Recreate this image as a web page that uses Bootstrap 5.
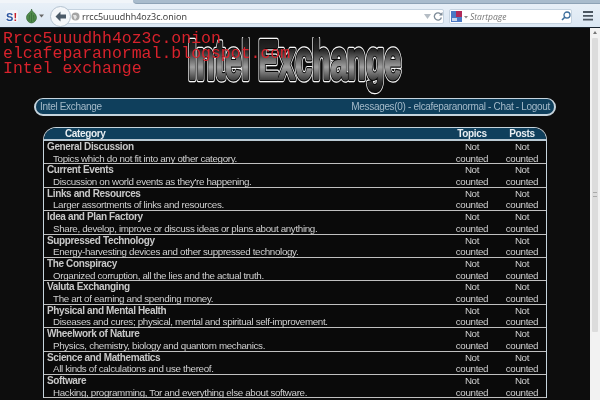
<!DOCTYPE html>
<html lang="en">
<head>
<meta charset="utf-8">
<title>Intel Exchange</title>
<link href="https://cdn.jsdelivr.net/npm/bootstrap@5.3.0/dist/css/bootstrap.min.css" rel="stylesheet">
<style>
html,body{height:400px;overflow:hidden;background:#0d0d0d}
body{font-family:"Liberation Sans",Arial,sans-serif;font-size:9.8px;letter-spacing:-.34px;color:#bdbdbd;filter:blur(.35px)}
.ff-chrome{height:28px;background:linear-gradient(#eaf1f8,#dbe7f3);border-bottom:1px solid #1a2530;position:relative;padding:9px 0 0 0;letter-spacing:0}
.ff-strip{position:absolute;left:133px;right:0;top:0;height:4px;background:#a9bccd;border-bottom:1px solid #8ea3b6;border-bottom-left-radius:6px}
.ff-strip-l{position:absolute;left:0;top:0;width:133px;height:3px;background:#f1f5f9}
.ff-urlbar{position:absolute;left:60px;top:9px;width:384px;height:15px;background:#fff;border:1px solid #c5d3e0;border-radius:2px;font-family:"Open Sans","Noto Sans",sans-serif;font-size:9px;line-height:13px;color:#333;padding-left:21px}
.ff-search{position:absolute;left:449px;top:9px;width:123px;height:15px;background:#fff;border:1px solid #c5d3e0;border-radius:2px;font-family:"Open Sans","Noto Sans",sans-serif;font-style:italic;font-size:8.5px;line-height:13px;color:#777;padding-left:20px}
.ff-back{position:absolute;left:50px;top:6px;width:21px;height:21px;border-radius:50%;background:#f4f7fa;border:1px solid #b5c3d0}
.ff-ico{position:absolute}
.ff-scroll{width:10px;flex:none;background:#f2f2f2;position:relative}
.ff-thumb{position:absolute;left:2px;width:6px;top:10px;height:294px;background:#dcdcdc;border-radius:1px}
.ff-arrow{position:absolute;left:3px;top:3px;width:0;height:0;border:2px solid transparent;border-bottom:3px solid #777;border-top:0}
.ff-grip{position:absolute;left:1px;top:154px;width:4px;height:5px;border-top:1px solid #aaa;border-bottom:1px solid #aaa}
.pg-main{height:372px}
.pg-wrap{position:relative;overflow:hidden;background:#0d0d0d}
.red-note{position:absolute;left:3px;top:3px;font-family:"Liberation Mono",monospace;font-size:16.5px;line-height:15px;letter-spacing:0;color:#d8222c;white-space:pre;z-index:2}
.logo-svg{display:block;margin:9px auto 0;width:230px;height:58px}
.top-nav{width:522px;height:18px;margin:3px auto 0;background:#0f3f5c;border:2px solid #c6d4dd;border-top-width:1px;border-radius:9px;color:#a4bac9;font-size:10px;letter-spacing:-.32px;line-height:16px;padding:0 4px}
.forum-box{width:504px;margin:11px auto 0;border:1px solid #c6d4dd;border-bottom:0;border-radius:13px 13px 0 0;overflow:hidden}
.forum-head{height:11px;background:#0f3f5c;border-bottom:2px solid #b9c9d3;color:#e8eef2;font-weight:700;font-size:10px;letter-spacing:-.37px;line-height:11px;box-sizing:content-box}
.forum-row{height:23.4px;border-bottom:1px solid #c0c0c0;line-height:11.7px;background:#0a0a0a}
.c-name{flex:1;min-width:0;padding-left:3px}
.c-num{width:50px;flex:none;text-align:center;color:#d0d0d0;padding-left:2px}
.c-name b{color:#c8c8c8;display:block;font-weight:700;font-size:10px;letter-spacing:-.37px}
.c-name span{display:block;padding-left:6px;color:#d0d0d0}
.h-cat{flex:1;padding-left:21px}
.h-num{width:50px;flex:none;text-align:center;padding-left:2px}
</style>
</head>
<body>
<nav class="ff-chrome">
  <div class="ff-strip-l"></div>
  <div class="ff-strip"></div>
  <svg class="ff-ico" style="left:5px;top:9px" width="14" height="14" viewBox="0 0 14 14"><rect x="1" y="1" width="12" height="12" rx="2" fill="#f3f6fa"/><text x="1" y="11.500" font-family="Liberation Sans" font-weight="700" font-size="11" fill="#2a55a0">S</text><text x="8.500" y="11.500" font-family="Liberation Sans" font-weight="700" font-size="11" fill="#c8202a">!</text></svg>
  <svg class="ff-ico" style="left:25px;top:8px" width="20" height="16" viewBox="0 0 20 16"><path d="M6.500 1C7 4 1.500 5 1.500 9.500c0 3 2.500 5.500 5 5.500s5-2.500 5-5.500C11.500 5 6.500 4 6.500 1z" fill="#4f8a4a" stroke="#2c5a2c" stroke-width=".6"/><path d="M6.500 5v9M4.500 7 4 13M8.500 7 9 13" stroke="#2c5a2c" stroke-width=".5" fill="none"/><path d="M14 6.500h5l-2.500 3z" fill="#666"/></svg>
  <div class="ff-urlbar">rrcc5uuudhh4oz3c.onion</div>
  <div class="ff-back"></div>
  <svg class="ff-ico" style="left:54px;top:10px" width="13" height="13" viewBox="0 0 13 13"><path d="M6.500 1.500 1.500 6.500l5 5V8.500H12v-4H6.500z" fill="#4a5a68"/></svg>
  <svg class="ff-ico" style="left:71px;top:12px" width="9" height="9" viewBox="0 0 9 9"><circle cx="4.500" cy="4.500" r="4" fill="#a5a5a5"/><path d="M2 3h3l1 2-2 3-1-2z" fill="#e4e4e4"/></svg>
  <svg class="ff-ico" style="left:424px;top:14px" width="7" height="5" viewBox="0 0 7 5"><path d="M0 0h7L3.500 5z" fill="#b5bdc5"/></svg>
  <svg class="ff-ico" style="left:433px;top:11px" width="10" height="10" viewBox="0 0 10 10"><path d="M8 3.500A3.600 3.600 0 1 0 8.400 6.500" fill="none" stroke="#7d8b98" stroke-width="1.300"/><path d="M9.500 1v3.500H6z" fill="#7d8b98"/></svg>
  <div class="ff-search">Startpage</div>
  <svg class="ff-ico" style="left:451px;top:10px" width="17" height="13" viewBox="0 0 17 13"><rect x="0" y="1" width="11" height="11" fill="#4a78c4"/><rect x="5" y="1" width="6" height="6" fill="#b02a5a"/><rect x="1" y="8" width="5" height="3" fill="#c9d8ee"/><path d="M13 6h4l-2 2.500z" fill="#888"/></svg>
  <svg class="ff-ico" style="left:561px;top:11px" width="10" height="10" viewBox="0 0 10 10"><circle cx="6" cy="4" r="3" fill="none" stroke="#3d6e9c" stroke-width="1.300"/><path d="M4 6 1 9" stroke="#3d6e9c" stroke-width="1.600"/></svg>
  <svg class="ff-ico" style="left:583px;top:11px" width="10" height="10" viewBox="0 0 10 10"><path d="M0 1h10M0 4.800h10M0 8.600h10" stroke="#4a5560" stroke-width="1.800"/></svg>
</nav>
<div class="d-flex pg-main">
  <main class="flex-grow-1 pg-wrap">
    <div class="red-note">Rrcc5uuudhh4oz3c.onion
elcafeparanormal.blogspot.com
Intel exchange</div>
    <svg class="logo-svg" viewBox="0 0 230 58" role="img" aria-label="Intel Exchange">
      <defs>
        <linearGradient id="lg" x1="0" y1="0" x2="0" y2="1"><stop offset="0" stop-color="#0a0a0a"/><stop offset=".35" stop-color="#262626"/><stop offset=".62" stop-color="#a0a0a0"/><stop offset=".85" stop-color="#333"/><stop offset="1" stop-color="#111"/></linearGradient>
        <text id="logo-word" x="8" y="42" font-family="Liberation Sans" font-weight="700" font-size="56" textLength="213" lengthAdjust="spacingAndGlyphs" stroke-linejoin="round">Intel Exchange</text>
      </defs>
      <use href="#logo-word" fill="none" stroke="#f8f8f8" stroke-width="6.500"/>
      <use href="#logo-word" fill="none" stroke="#0a0a0a" stroke-width="4.200"/>
      <use href="#logo-word" fill="url(#lg)" stroke="url(#lg)" stroke-width="1.800"/>
    </svg>
    <div class="top-nav d-flex justify-content-between">
      <span>Intel Exchange</span>
      <span>Messages(0) - elcafeparanormal - Chat - Logout</span>
    </div>
    <section class="forum-box">
      <div class="forum-head d-flex">
        <div class="h-cat">Category</div>
        <div class="h-num">Topics</div>
        <div class="h-num">Posts</div>
      </div>
      <div class="forum-row d-flex"><div class="c-name"><b>General Discussion</b><span>Topics which do not fit into any other category.</span></div><div class="c-num">Not<br>counted</div><div class="c-num">Not<br>counted</div></div>
      <div class="forum-row d-flex"><div class="c-name"><b>Current Events</b><span>Discussion on world events as they're happening.</span></div><div class="c-num">Not<br>counted</div><div class="c-num">Not<br>counted</div></div>
      <div class="forum-row d-flex"><div class="c-name"><b>Links and Resources</b><span>Larger assortments of links and resources.</span></div><div class="c-num">Not<br>counted</div><div class="c-num">Not<br>counted</div></div>
      <div class="forum-row d-flex"><div class="c-name"><b>Idea and Plan Factory</b><span>Share, develop, improve or discuss ideas or plans about anything.</span></div><div class="c-num">Not<br>counted</div><div class="c-num">Not<br>counted</div></div>
      <div class="forum-row d-flex"><div class="c-name"><b>Suppressed Technology</b><span>Energy-harvesting devices and other suppressed technology.</span></div><div class="c-num">Not<br>counted</div><div class="c-num">Not<br>counted</div></div>
      <div class="forum-row d-flex"><div class="c-name"><b>The Conspiracy</b><span>Organized corruption, all the lies and the actual truth.</span></div><div class="c-num">Not<br>counted</div><div class="c-num">Not<br>counted</div></div>
      <div class="forum-row d-flex"><div class="c-name"><b>Valuta Exchanging</b><span>The art of earning and spending money.</span></div><div class="c-num">Not<br>counted</div><div class="c-num">Not<br>counted</div></div>
      <div class="forum-row d-flex"><div class="c-name"><b>Physical and Mental Health</b><span>Diseases and cures; physical, mental and spiritual self-improvement.</span></div><div class="c-num">Not<br>counted</div><div class="c-num">Not<br>counted</div></div>
      <div class="forum-row d-flex"><div class="c-name"><b>Wheelwork of Nature</b><span>Physics, chemistry, biology and quantom mechanics.</span></div><div class="c-num">Not<br>counted</div><div class="c-num">Not<br>counted</div></div>
      <div class="forum-row d-flex"><div class="c-name"><b>Science and Mathematics</b><span>All kinds of calculations and use thereof.</span></div><div class="c-num">Not<br>counted</div><div class="c-num">Not<br>counted</div></div>
      <div class="forum-row d-flex"><div class="c-name"><b>Software</b><span>Hacking, programming, Tor and everything else about software.</span></div><div class="c-num">Not<br>counted</div><div class="c-num">Not<br>counted</div></div>
    </section>
  </main>
  <aside class="ff-scroll"><div class="ff-arrow"></div><div class="ff-thumb"><div class="ff-grip"></div></div></aside>
</div>
<script src="https://cdn.jsdelivr.net/npm/bootstrap@5.3.0/dist/js/bootstrap.bundle.min.js"></script>
</body>
</html>
